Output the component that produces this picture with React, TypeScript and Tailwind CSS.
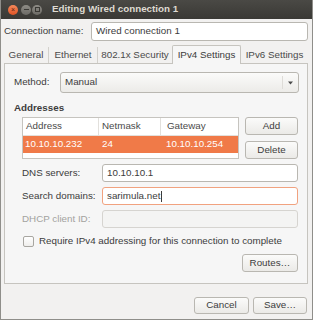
import React from "react";

const font = { fontFamily: "'Liberation Sans', Arial, sans-serif" };

function Btn({ label, className = "" }: { label: string; className?: string }) {
    return (
        <div className={`flex items-center justify-center rounded-[3px] border border-[#b9b7b1] bg-gradient-to-b from-[#fbfbfa] to-[#ebeae7] text-[#3c3c3c] ${className}`}>
            {label}
        </div>
    );
}

function Field({ value, focused = false, disabled = false }: { value?: string; focused?: boolean; disabled?: boolean }) {
    const border = focused ? "border-[#f1a27f]" : disabled ? "border-[#d6d4d0]" : "border-[#b9b7b1]";
    const bg = disabled ? "bg-[#f4f4f3]" : "bg-white";
    return (
        <div className={`w-[196px] h-[18px] rounded-[3px] border ${border} ${bg} flex items-center pl-[4px] text-[#3c3c3c]`}>
            {value}
            {focused && <span className="w-px h-[11px] bg-[#3c3c3c] ml-px" />}
        </div>
    );
}

export default function App() {
    const tabs = [
        { label: "General", w: "w-[44px]" },
        { label: "Ethernet", w: "w-[49px]" },
        { label: "802.1x Security", w: "w-[75px]" },
    ];

    return (
        <div style={font} className="w-[313px] h-[320px] flex flex-col bg-[#f2f1f0] border-x border-b border-[#8f8e8a] text-[9.8px] text-[#3c3c3c] overflow-hidden">
            {/* Title bar */}
            <div className="h-[19px] shrink-0 flex items-center bg-gradient-to-b from-[#4a4945] to-[#3a3935] -mx-px">
                <div className="ml-[8px] w-[10px] h-[10px] rounded-full bg-gradient-to-b from-[#f7895a] to-[#df5324] flex items-center justify-center text-[7px] leading-none text-[#5a2210]">×</div>
                <div className="ml-[3px] w-[10px] h-[10px] rounded-full bg-gradient-to-b from-[#8e8c86] to-[#6c6a65] flex items-center justify-center">
                    <span className="w-[5px] h-px bg-[#3a3935]" />
                </div>
                <div className="ml-px w-[10px] h-[10px] rounded-full bg-gradient-to-b from-[#8e8c86] to-[#6c6a65] flex items-center justify-center">
                    <span className="w-[5px] h-[5px] border border-[#3a3935]" />
                </div>
                <span className="ml-[10px] font-bold text-[#dfdbd2]">Editing Wired connection 1</span>
            </div>

            <div className="flex flex-col pl-[3px] pr-[4px]">
                {/* Connection name */}
                <div className="mt-[3px] h-[19px] flex items-center">
                    <span>Connection name:</span>
                    <div className="ml-auto w-[217px] h-[19px] rounded-[3px] border border-[#b9b7b1] bg-white flex items-center pl-[4px]">
                        Wired connection 1
                    </div>
                </div>

                {/* Tabs */}
                <div className="mt-[4px] h-[18px] flex items-end relative z-10">
                    {tabs.map((t, i) => (
                        <div key={t.label} className={`${t.w} h-[16px] flex items-center justify-center text-[#4a4a4a] ${i > 0 ? "border-l border-[#d3d1cc]" : ""}`}>
                            {t.label}
                        </div>
                    ))}
                    <div className="w-[69px] h-[19px] -mb-px flex items-center justify-center rounded-t-[2px] border border-b-0 border-[#c6c4bf] bg-[#f6f6f6] text-[#3c3c3c]">
                        IPv4 Settings
                    </div>
                    <div className="flex-1 h-[16px] flex items-center justify-center text-[#4a4a4a]">IPv6 Settings</div>
                </div>

                {/* Notebook */}
                <div className="h-[221px] border border-[#c6c4bf] bg-[#f6f6f6] flex flex-col">
                    <div className="mt-[8px] pl-[9px] flex items-center">
                        <span className="w-[46px]">Method:</span>
                        <div className="w-[239px] h-[21px] rounded-[3px] border border-[#b9b7b1] bg-gradient-to-b from-[#fbfbfa] to-[#ecebe8] flex items-center pl-[4px]">
                            <span className="flex-1">Manual</span>
                            <span className="w-px h-[13px] bg-[#dedcd8]" />
                            <svg width="15" height="8" viewBox="0 0 15 8"><path d="M5 2.5h5l-2.5 3z" fill="#4a4a4a" /></svg>
                        </div>
                    </div>

                    <div className="mt-[9px] pl-[9px] font-bold leading-[12px]">Addresses</div>

                    <div className="mt-[3px] pl-[17px] flex">
                        <div className="w-[217px] h-[42px] border border-[#c6c4bf] bg-white flex flex-col">
                            <div className="h-[18px] flex items-center border-b border-[#e2e0dc] text-[#4a4a4a]">
                                <span className="w-[76px] pl-[3px] border-r border-[#e2e0dc] h-full flex items-center">Address</span>
                                <span className="w-[62px] pl-[3px] border-r border-[#e2e0dc] h-full flex items-center">Netmask</span>
                                <span className="pl-[6px]">Gateway</span>
                            </div>
                            <div className="h-[17px] flex items-center bg-[#f07a48] text-white">
                                <span className="w-[76px] pl-[2px]">10.10.10.232</span>
                                <span className="w-[62px] pl-[3px]">24</span>
                                <span className="pl-[5px]">10.10.10.254</span>
                            </div>
                        </div>
                        <div className="ml-[6px] flex flex-col gap-[6px]">
                            <Btn label="Add" className="w-[53px] h-[18px]" />
                            <Btn label="Delete" className="w-[53px] h-[18px]" />
                        </div>
                    </div>

                    <div className="mt-[5px] pl-[17px] flex flex-col gap-[5px]">
                        <div className="flex items-center">
                            <span className="w-[80px]">DNS servers:</span>
                            <Field value="10.10.10.1" />
                        </div>
                        <div className="flex items-center">
                            <span className="w-[80px]">Search domains:</span>
                            <Field value="sarimula.net" focused />
                        </div>
                        <div className="flex items-center">
                            <span className="w-[80px] text-[#a3a29e]">DHCP client ID:</span>
                            <Field disabled />
                        </div>
                    </div>

                    <div className="mt-[7px] pl-[18px] flex items-center h-[12px]">
                        <span className="w-[11px] h-[11px] rounded-[2px] border border-[#a8a6a1] bg-gradient-to-b from-white to-[#efeeec]" />
                        <span className="ml-[5px]">Require IPv4 addressing for this connection to complete</span>
                    </div>

                    <div className="mt-[7px] pr-[9px] flex justify-end">
                        <Btn label="Routes…" className="w-[56px] h-[18px]" />
                    </div>
                </div>

                {/* Dialog buttons */}
                <div className="mt-[13px] flex justify-end gap-[4px] pr-px">
                    <Btn label="Cancel" className="w-[55px] h-[17px]" />
                    <Btn label="Save…" className="w-[54px] h-[17px]" />
                </div>
            </div>
        </div>
    );
}
